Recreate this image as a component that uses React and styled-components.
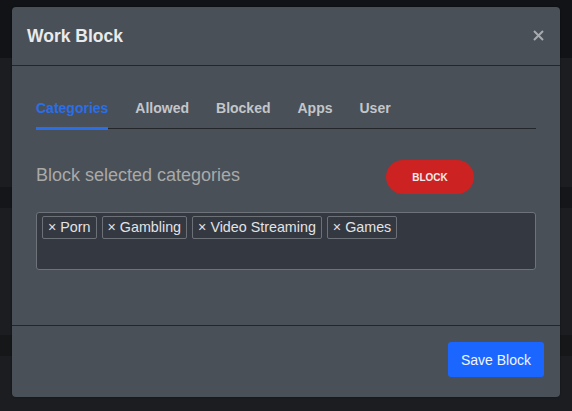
import React from "react";
import styled, { createGlobalStyle } from "styled-components";

const Global = createGlobalStyle`
  html, body { margin: 0; padding: 0; }
  body {
    width: 572px;
    height: 411px;
    overflow: hidden;
    background: #1b1d20;
    font-family: "Liberation Sans", Arial, sans-serif;
  }
`;

const Page = styled.div`
  position: relative;
  width: 572px;
  height: 411px;
  display: flex;
  flex-direction: column;
`;

const Band = styled.div`
  height: ${(p) => p.$h}px;
  flex: ${(p) => (p.$grow ? 1 : "none")};
  background: ${(p) => p.$bg};
`;

const Modal = styled.div`
  position: absolute;
  left: 12px;
  top: 7px;
  width: 548px;
  display: flex;
  flex-direction: column;
  background: #4a5058;
  border-radius: 4px;
  box-shadow: 0 0 2px rgba(0, 0, 0, 0.4);
`;

const Header = styled.div`
  height: 58px;
  display: flex;
  align-items: center;
  justify-content: space-between;
  padding: 0 16px 0 15px;
  border-bottom: 1px solid #23272c;
`;

const Title = styled.h5`
  margin: 0;
  font-size: 17.5px;
  font-weight: 700;
  color: #e9eaec;
`;

const Close = styled.button`
  width: 12px;
  height: 12px;
  padding: 0;
  border: 0;
  background: none;
  display: flex;
  align-items: center;
  justify-content: center;
  margin-top: -2px;
`;

const Body = styled.div`
  padding: 32px 24px 55px;
  border-bottom: 1px solid #23272c;
`;

const TabList = styled.div`
  display: flex;
  gap: 27px;
  border-bottom: 1px solid #23272c;
`;

const Tab = styled.div`
  font-size: 14px;
  font-weight: 700;
  line-height: 20px;
  padding-bottom: 9px;
  margin-bottom: -2px;
  color: ${(p) => (p.$active ? "#2a6ee8" : "#c3c6ca")};
  border-bottom: 3px solid ${(p) => (p.$active ? "#2a6ee8" : "transparent")};
`;

const ActionRow = styled.div`
  margin-top: 31px;
  height: 34px;
  display: grid;
  grid-template-columns: 350px auto;
  align-items: center;
`;

const Label = styled.div`
  font-size: 18px;
  color: #a9aaa8;
  margin-top: -3px;
`;

const BlockButton = styled.button`
  width: 88px;
  height: 34px;
  border: 0;
  border-radius: 17px;
  background: #cc2222;
  color: #f4eaea;
  font-family: "Liberation Sans", Arial, sans-serif;
  font-size: 10px;
  font-weight: 700;
  padding: 0;
`;

const TagBox = styled.div`
  margin-top: 18px;
  min-height: 58px;
  box-sizing: border-box;
  background: #343841;
  border: 1px solid #6e737a;
  border-radius: 3px;
  padding: 3px 5px;
  display: flex;
  flex-wrap: wrap;
  align-content: flex-start;
  gap: 5px;
`;

const Tag = styled.span`
  font-size: 14.3px;
  line-height: 21px;
  padding: 0 5px;
  color: #e2e3e5;
  border: 1px solid #6c7178;
  border-radius: 2px;
  white-space: nowrap;
`;

const Footer = styled.div`
  display: flex;
  justify-content: flex-end;
  padding: 16px 16px 20px;
`;

const SaveButton = styled.button`
  height: 35px;
  padding: 0 13px;
  border: 0;
  border-radius: 3px;
  background: #1a66ff;
  color: #f2f5ff;
  font-family: "Liberation Sans", Arial, sans-serif;
  font-size: 14px;
`;

const tabs = ["Categories", "Allowed", "Blocked", "Apps", "User"];
const tags = ["Porn", "Gambling", "Video Streaming", "Games"];

export default function App() {
  return (
    <>
      <Global />
      <Page>
        <Band $h={58} $bg="#111316" />
        <Band $h={129} $bg="#1b1d20" />
        <Band $h={21} $bg="#141619" />
        <Band $h={127} $bg="#1b1d20" />
        <Band $h={21} $bg="#151719" />
        <Band $grow $bg="#1b1d20" />
        <Modal>
          <Header>
            <Title>Work Block</Title>
            <Close aria-label="Close">
              <svg width="11" height="11" viewBox="0 0 11 11">
                <path d="M1 1L10 10M10 1L1 10" stroke="#a7abb0" strokeWidth="2" />
              </svg>
            </Close>
          </Header>
          <Body>
            <TabList>
              {tabs.map((t, i) => (
                <Tab key={t} $active={i === 0}>
                  {t}
                </Tab>
              ))}
            </TabList>
            <ActionRow>
              <Label>Block selected categories</Label>
              <BlockButton>BLOCK</BlockButton>
            </ActionRow>
            <TagBox>
              {tags.map((t) => (
                <Tag key={t}>× {t}</Tag>
              ))}
            </TagBox>
          </Body>
          <Footer>
            <SaveButton>Save Block</SaveButton>
          </Footer>
        </Modal>
      </Page>
    </>
  );
}
